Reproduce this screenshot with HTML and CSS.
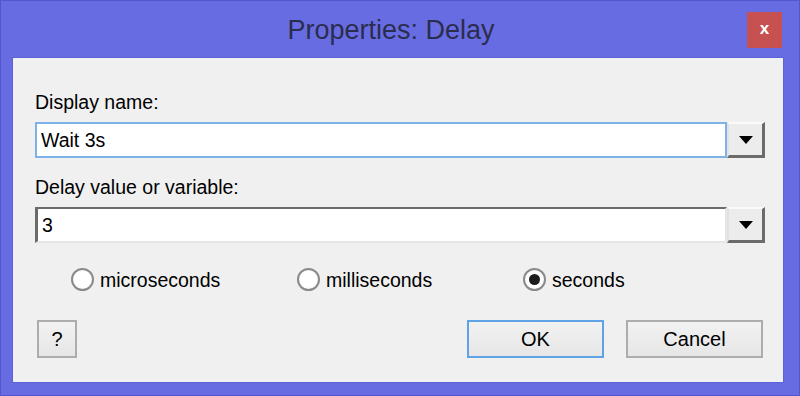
FILE: index.html
```html
<!DOCTYPE html>
<html lang="en">
<head>
    <meta charset="UTF-8">
    <meta name="viewport" content="width=device-width, initial-scale=1.0">
    <title>Properties: Delay</title>
    <link rel="stylesheet" href="styles.css">
</head>
<body>
    <div class="window">
        <div class="titlebar">
            <span></span>
            <span class="title">Properties: Delay</span>
            <button class="close-btn">x</button>
        </div>

        <div class="client">
            <label class="field-label">Display name:</label>
            <div class="combo">
                <div class="combo-input focused">Wait 3s</div>
                <div class="combo-btn"><span class="arrow"></span></div>
            </div>

            <label class="field-label second">Delay value or variable:</label>
            <div class="combo">
                <div class="combo-input sunken">3</div>
                <div class="combo-btn"><span class="arrow"></span></div>
            </div>

            <div class="units">
                <div class="radio"><span class="dot"></span>microseconds</div>
                <div class="radio"><span class="dot"></span>milliseconds</div>
                <div class="radio checked"><span class="dot"></span>seconds</div>
            </div>

            <div class="actions">
                <button class="btn help-btn">?</button>
                <button class="btn ok-btn">OK</button>
                <button class="btn cancel-btn">Cancel</button>
            </div>
        </div>
    </div>
</body>
</html>
```

FILE: styles.css
```css
body {
    margin: 0;
    padding: 0;
    font-family: "Liberation Sans", Arial, sans-serif;
    background: #686ce3;
}

.window {
    width: 800px;
    height: 396px;
    background: #686ce3;
    box-shadow: inset 0 0 0 1px #5357cf;
    overflow: hidden;
}

/* Title bar */
.titlebar {
    display: grid;
    grid-template-columns: 1fr auto 1fr;
    align-items: start;
    height: 58px;
    box-sizing: border-box;
    padding: 12px 18px 0 0;
}

.title {
    margin-top: 3px;
    font-size: 27px;
    line-height: 30px;
    color: #2b2d4e;
}

.close-btn {
    justify-self: end;
    width: 35px;
    height: 36px;
    padding: 0 0 3px;
    border: none;
    background: #c75050;
    color: white;
    font-family: "Liberation Sans", Arial, sans-serif;
    font-size: 17px;
    font-weight: bold;
}

/* Dialog body */
.client {
    height: 324px;
    margin: 0 17px 0 13px;
    box-sizing: border-box;
    padding: 33px 18px 0 22px;
    background: #f0f0f0;
    box-shadow: 0 0 0 1px #5d61d6;
    font-size: 19.5px;
    color: #000;
}

.field-label {
    display: block;
    line-height: 22px;
    margin-bottom: 9px;
}

.field-label.second {
    margin-top: 18px;
}

.combo {
    display: flex;
    height: 36px;
}

.combo-input {
    flex: 1;
    box-sizing: border-box;
    background: white;
    line-height: 32px;
    padding-left: 4px;
}

.combo-input.focused {
    border: 2px solid #7db2e8;
}

.combo-input.sunken {
    border-top: 2px solid #6b6b6b;
    border-left: 3px solid #6b6b6b;
    border-bottom: 2px solid #e6e6e6;
    border-right: 2px solid #e6e6e6;
    padding-left: 4px;
}

.combo-btn {
    width: 38px;
    box-sizing: border-box;
    display: flex;
    align-items: center;
    justify-content: center;
    background: #ececec;
    border-top: 2px solid #fafafa;
    border-left: 2px solid #e2e2e2;
    border-right: 3px solid #6b6b6b;
    border-bottom: 3px solid #6b6b6b;
}

.arrow {
    width: 0;
    height: 0;
    border-left: 7px solid transparent;
    border-right: 7px solid transparent;
    border-top: 8px solid #000;
    margin-top: 1px;
}

/* Unit radios */
.units {
    display: grid;
    grid-template-columns: repeat(3, 226px);
    margin-top: 25px;
    padding-left: 36px;
}

.radio {
    display: flex;
    align-items: center;
    gap: 6px;
    line-height: 22px;
}

.radio .dot {
    width: 23px;
    height: 23px;
    box-sizing: border-box;
    border: 2px solid #8a8a8a;
    border-radius: 50%;
    background: radial-gradient(circle, #ffffff 55%, #e8e8e8 100%);
    display: flex;
    align-items: center;
    justify-content: center;
}

.radio.checked .dot::after {
    content: "";
    width: 11px;
    height: 11px;
    border-radius: 50%;
    background: #1c1c1c;
}

/* Buttons */
.actions {
    display: flex;
    gap: 22px;
    margin-top: 29px;
    padding: 0 2px;
}

.btn {
    height: 38px;
    box-sizing: border-box;
    border: 2px solid #adadad;
    background: linear-gradient(#f2f2f2, #e6e6e6);
    font-family: "Liberation Sans", Arial, sans-serif;
    font-size: 20px;
    color: #000;
    padding: 0;
}

.help-btn {
    width: 40px;
    margin-right: auto;
}

.ok-btn {
    width: 137px;
    border-color: #5fa2e6;
}

.cancel-btn {
    width: 137px;
}
```
